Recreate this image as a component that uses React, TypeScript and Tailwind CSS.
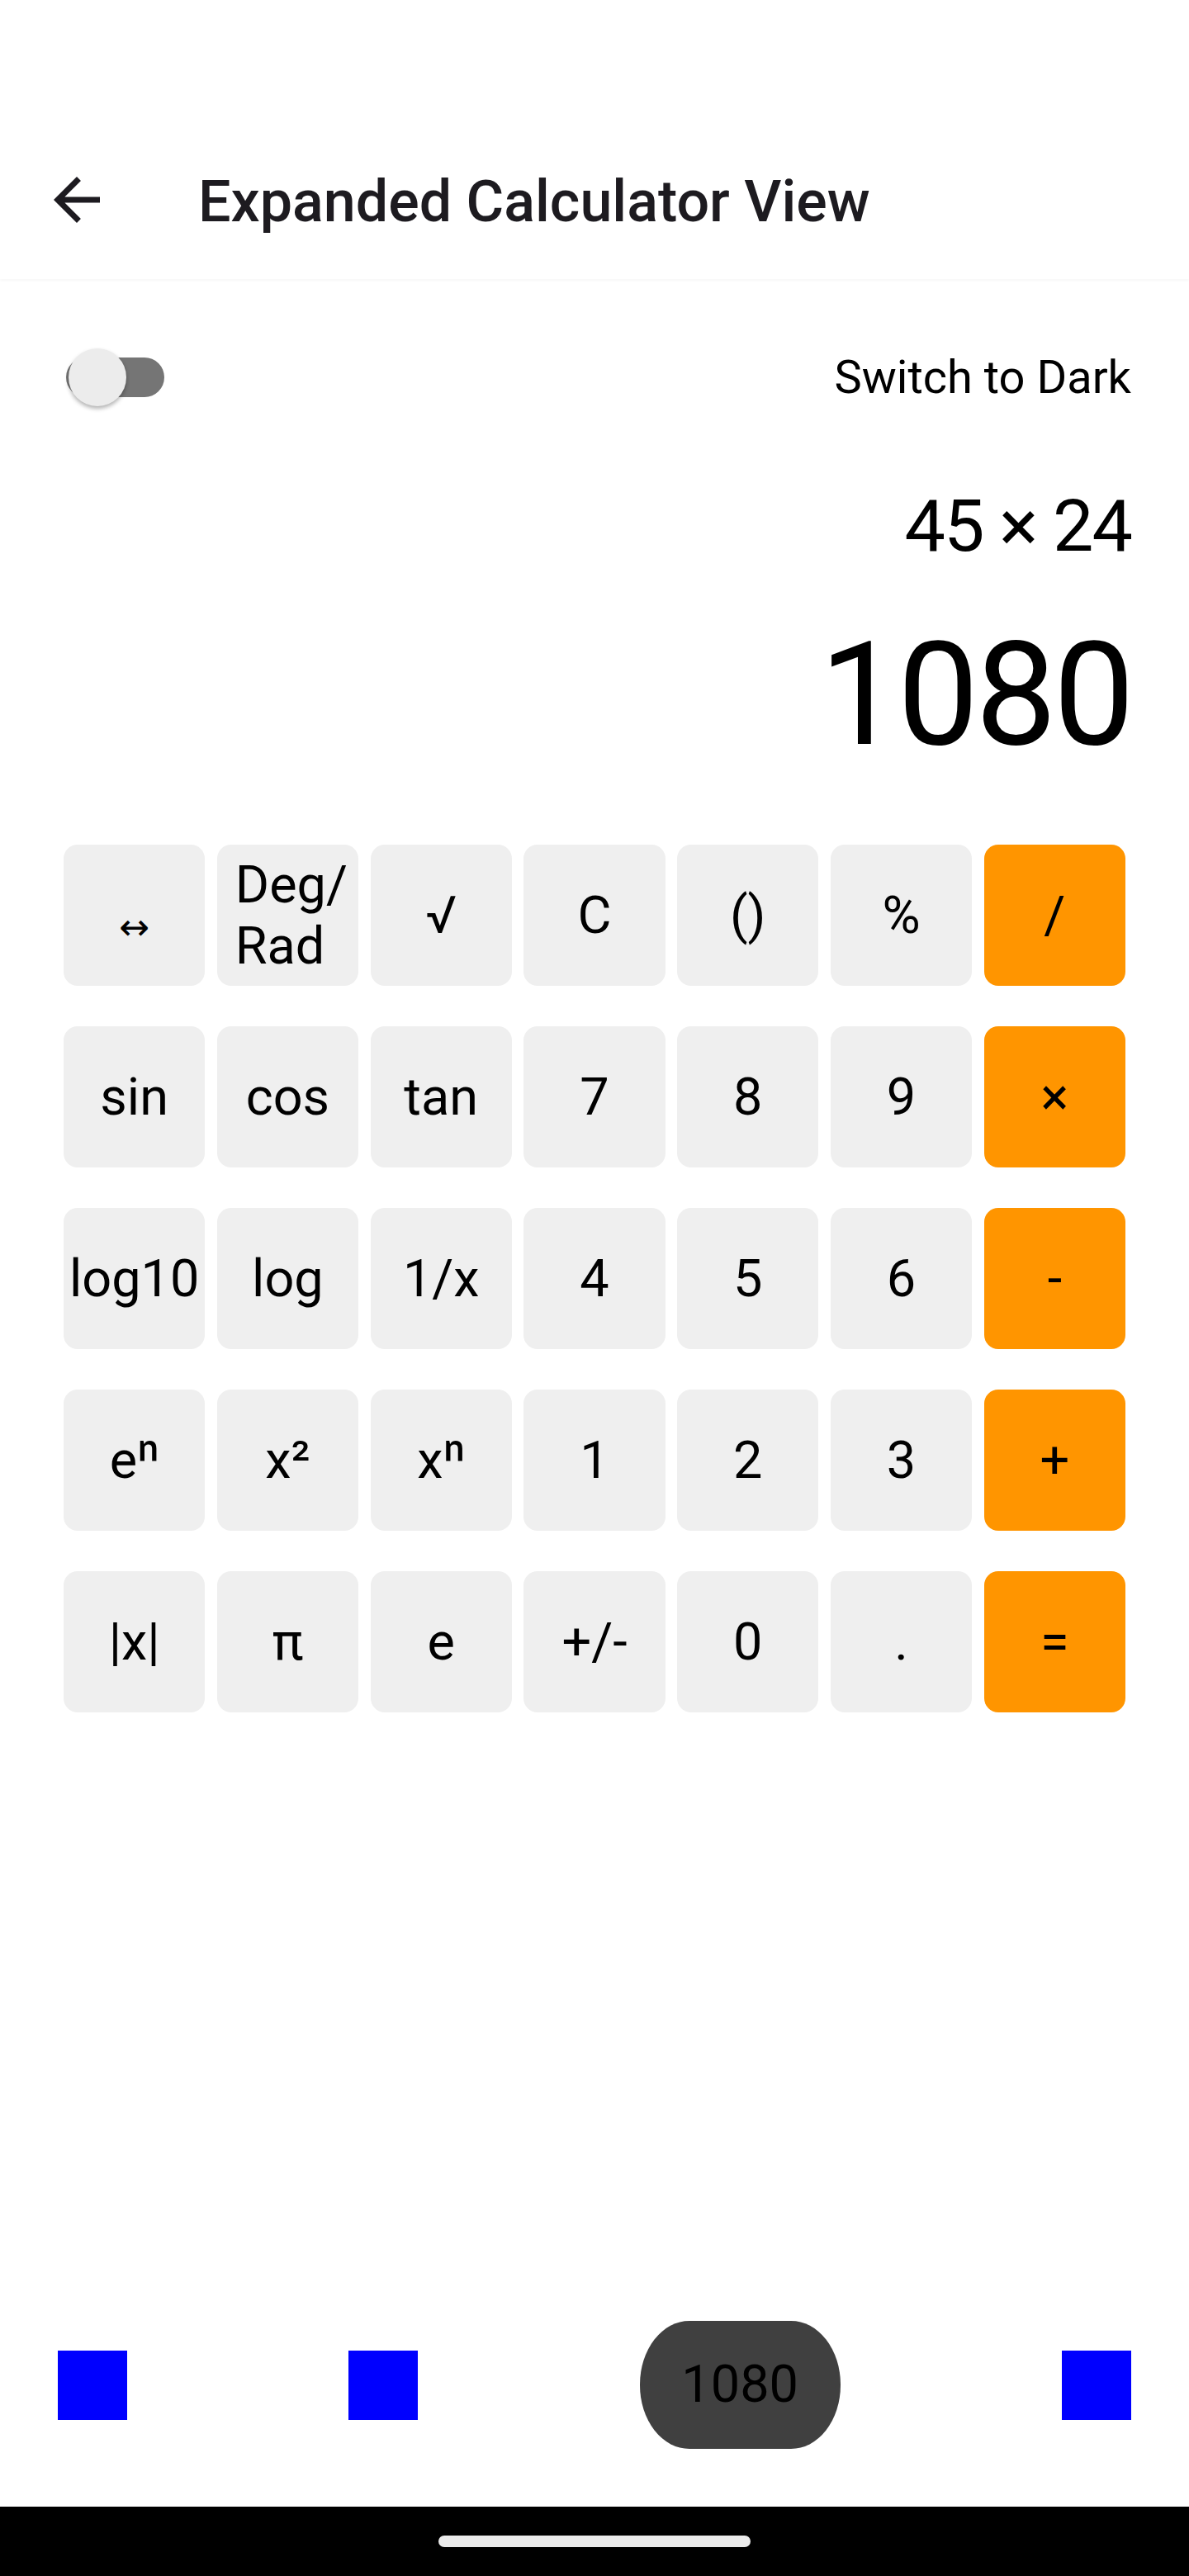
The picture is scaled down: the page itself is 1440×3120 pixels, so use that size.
import React from "react";

const rows: string[][] = [
  ["↔", "Deg/Rad", "√", "C", "()", "%", "/"],
  ["sin", "cos", "tan", "7", "8", "9", "×"],
  ["log10", "log", "1/x", "4", "5", "6", "-"],
  ["eⁿ", "x²", "xⁿ", "1", "2", "3", "+"],
  ["|x|", "π", "e", "+/-", "0", ".", "="],
];

function Key({ label, orange }: { label: string; orange: boolean }) {
  const base =
    "h-[171px] rounded-[17px] flex items-center text-[63px] leading-[74px] text-black " +
    (orange ? "bg-[#ff9500] " : "bg-[#efefef] ");
  if (label === "Deg/Rad") {
    return (
      <div className={base + "justify-start pl-[22px]"}>
        <span className="block text-left">
          Deg/
          <br />
          Rad
        </span>
      </div>
    );
  }
  if (label === "↔") {
    return (
      <div className={base + "justify-center"}>
        <span className="text-[44px] translate-y-[14px] font-['DejaVu_Sans',sans-serif]">↔</span>
      </div>
    );
  }
  return <div className={base + "justify-center"}>{label}</div>;
}

export default function App() {
  return (
    <div className="w-[1440px] h-[3120px] bg-white flex flex-col font-['Roboto',sans-serif] text-black">
      {/* Header */}
      <div className="h-[338px] pt-[201px] shadow-[0_2px_3px_rgba(0,0,0,0.03)] relative z-10 bg-white">
        <div className="flex items-center h-[84px]">
          <div className="w-[84px] h-[84px] ml-[51px] -mt-[2px]">
            <svg viewBox="0 0 24 24" width="84" height="84" fill="#1d1b20">
              <path d="M20 11H7.83l5.59-5.59L12 4l-8 8 8 8 1.41-1.41L7.83 13H20v-2z" />
            </svg>
          </div>
          <div className="ml-[105px] text-[70px] leading-[84px] font-medium text-[#1d1b20] mt-[2px]">
            Expanded Calculator View
          </div>
        </div>
      </div>

      {/* Toggle row */}
      <div className="mt-[79px] h-[80px] px-[70px] flex items-center justify-between">
        <div className="relative w-[119px] h-[70px] ml-[10px]">
          <div className="absolute left-0 right-0 top-[11px] h-[48px] rounded-full bg-[#757575]" />
          <div className="absolute left-[3px] top-0 w-[70px] h-[70px] rounded-full bg-[#ececec] shadow-[0_3px_5px_rgba(0,0,0,0.3)]" />
        </div>
        <div className="text-[56px] leading-[80px]">Switch to Dark</div>
      </div>

      {/* Expression */}
      <div className="mt-[96px] px-[70px] text-right text-[88px] leading-[88px] tracking-[-2px]">45 × 24</div>

      {/* Result */}
      <div className="mt-[73px] px-[70px] text-right text-[175px] leading-[175px] tracking-[-4px]">1080</div>

      {/* Keypad */}
      <div className="mt-[94px] px-[77px] flex flex-col gap-y-[49px]">
        {rows.map((row, ri) => (
          <div key={ri} className="grid grid-cols-7 gap-x-[14.5px]">
            {row.map((k, ci) => (
              <Key key={ci} label={k} orange={ci === 6} />
            ))}
          </div>
        ))}
      </div>

      <div className="flex-1" />

      {/* Bottom bar */}
      <div className="h-[155px] mb-[70px] px-[70px] flex items-center justify-between">
        <div className="w-[84px] h-[84px] bg-[#0000ff]" />
        <div className="w-[84px] h-[84px] bg-[#0000ff]" />
        <div className="w-[243px] h-[155px] rounded-[60px_/_77px] bg-[#404040] flex items-center justify-center text-[63px] text-black">
          1080
        </div>
        <div className="w-[84px] h-[84px] bg-[#0000ff]" />
      </div>

      {/* System nav bar */}
      <div className="h-[84px] bg-black flex items-center justify-center">
        <div className="w-[378px] h-[14px] rounded-full bg-[#ebebeb]" />
      </div>
    </div>
  );
}
